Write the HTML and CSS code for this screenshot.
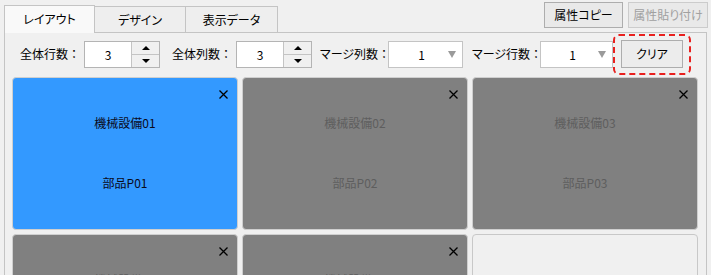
FILE: index.html
```html
<!DOCTYPE html>
<html lang="ja">
<head>
<meta charset="utf-8">
<link rel="stylesheet" href="styles.css">
</head>
<body>
<div class="header">
  <div class="tabs">
    <div class="tab active">レイアウト</div>
    <div class="tab">デザイン</div>
    <div class="tab">表示データ</div>
  </div>
  <div class="actions">
    <button class="btn btn-copy">属性コピー</button>
    <button class="btn btn-paste" disabled>属性貼り付け</button>
  </div>
</div>
<div class="panel">
  <div class="controls">
    <span class="label l1">全体行数<span class="colon">：</span></span>
    <div class="spin">
      <div class="spin-val">3</div>
      <div class="spin-btns">
        <div class="spin-up"><span class="tri-up"></span></div>
        <div class="spin-down"><span class="tri-down"></span></div>
      </div>
    </div>
    <span class="label l2">全体列数<span class="colon">：</span></span>
    <div class="spin">
      <div class="spin-val">3</div>
      <div class="spin-btns">
        <div class="spin-up"><span class="tri-up"></span></div>
        <div class="spin-down"><span class="tri-down"></span></div>
      </div>
    </div>
    <span class="label l3">マージ列数<span class="colon">：</span></span>
    <div class="combo c1">
      <div class="combo-val">1</div>
      <span class="combo-arrow"></span>
    </div>
    <span class="label l4">マージ行数<span class="colon">：</span></span>
    <div class="combo c2">
      <div class="combo-val">1</div>
      <span class="combo-arrow"></span>
    </div>
    <div class="clear-wrap">
      <button class="btn-clear">クリア</button>
      <span class="ring"></span>
    </div>
  </div>
  <div class="grid">
    <div class="card selected">
      <svg class="close" width="9" height="9" viewBox="0 0 9 9"><path d="M0.5 0.5L8.5 8.5M8.5 0.5L0.5 8.5" stroke="#000" stroke-width="1.3"/></svg>
      <div class="t1">機械設備01</div>
      <div class="t2">部品P01</div>
    </div>
    <div class="card">
      <svg class="close" width="9" height="9" viewBox="0 0 9 9"><path d="M0.5 0.5L8.5 8.5M8.5 0.5L0.5 8.5" stroke="#000" stroke-width="1.3"/></svg>
      <div class="t1">機械設備02</div>
      <div class="t2">部品P02</div>
    </div>
    <div class="card">
      <svg class="close" width="9" height="9" viewBox="0 0 9 9"><path d="M0.5 0.5L8.5 8.5M8.5 0.5L0.5 8.5" stroke="#000" stroke-width="1.3"/></svg>
      <div class="t1">機械設備03</div>
      <div class="t2">部品P03</div>
    </div>
    <div class="card">
      <svg class="close" width="9" height="9" viewBox="0 0 9 9"><path d="M0.5 0.5L8.5 8.5M8.5 0.5L0.5 8.5" stroke="#000" stroke-width="1.3"/></svg>
      <div class="t1">機械設備04</div>
      <div class="t2">部品P04</div>
    </div>
    <div class="card">
      <svg class="close" width="9" height="9" viewBox="0 0 9 9"><path d="M0.5 0.5L8.5 8.5M8.5 0.5L0.5 8.5" stroke="#000" stroke-width="1.3"/></svg>
      <div class="t1">機械設備05</div>
      <div class="t2">部品P05</div>
    </div>
    <div class="card empty"></div>
  </div>
</div>
</body>
</html>
```

FILE: styles.css
```css
* { box-sizing: border-box; }
html, body {
  margin: 0;
  padding: 0;
  background: #f0f0f0;
  font-family: "Noto Sans CJK JP", "Noto Sans", sans-serif;
  font-size: 12px;
  color: #000;
  font-feature-settings: "palt";
  overflow: hidden;
}
.header {
  height: 32px;
  display: flex;
  justify-content: space-between;
  padding-left: 4px;
  padding-right: 3px;
}
.tabs {
  display: flex;
  align-items: flex-end;
}
.tab {
  width: 91px;
  height: 26px;
  border: 1px solid #c4c4c4;
  border-left: none;
  border-bottom: none;
  background: #eeeeee;
  display: flex;
  align-items: center;
  justify-content: center;
  line-height: 1;
}
.tab:last-child { width: 92px; }
.tab.active {
  height: 28px;
  border-left: 1px solid #c4c4c4;
  background: #f9f9f9;
  position: relative;
  z-index: 2;
  margin-bottom: -1px;
  padding-bottom: 2px;
}
.actions {
  display: flex;
  gap: 5px;
  padding-top: 2px;
}
.btn {
  height: 26px;
  border: 1px solid #adadad;
  background: #e9e9e9;
  font-family: inherit;
  font-size: 12px;
  font-feature-settings: "palt";
  color: #000;
  padding: 0;
  line-height: 1;
}
.btn-copy { width: 79px; }
.btn-paste {
  width: 80px;
  color: #a0a0a0;
  border-color: #cccccc;
}
.panel {
  margin-left: 4px;
  margin-right: 4px;
  border: 1px solid #c4c4c4;
  border-bottom: none;
  background: #f0f0f0;
  height: 243px;
  overflow: hidden;
  position: relative;
  z-index: 1;
}
.controls {
  display: flex;
  align-items: center;
  height: 28px;
  margin-top: 7px;
  padding-left: 15px;
}
.label {
  white-space: nowrap;
  line-height: 1;
}
.colon { font-feature-settings: normal; }
.l1 { width: 64px; }
.l2 { width: 64px; margin-left: 12px; }
.l3 { width: 68px; margin-left: 8px; }
.l4 { width: 68px; margin-left: 9px; }
.spin {
  width: 76px;
  height: 27px;
  border: 1px solid #b4b4b4;
  display: flex;
  background: #fff;
}
.spin-val {
  flex: 1;
  display: flex;
  align-items: center;
  justify-content: center;
  font-size: 12px;
}
.spin-btns {
  width: 28px;
  border-left: 1px solid #c4c4c4;
  display: flex;
  flex-direction: column;
  background: #f0f0f0;
}
.spin-up, .spin-down {
  flex: 1;
  display: flex;
  align-items: center;
  justify-content: center;
}
.spin-up { border-bottom: 1px solid #c4c4c4; }
.tri-up {
  width: 0; height: 0;
  border-left: 4px solid transparent;
  border-right: 4px solid transparent;
  border-bottom: 4px solid #000;
}
.tri-down {
  width: 0; height: 0;
  border-left: 4px solid transparent;
  border-right: 4px solid transparent;
  border-top: 4px solid #000;
}
.combo {
  height: 27px;
  border: 1px solid #c4c4c4;
  background: #fff;
  display: flex;
  align-items: center;
  padding-right: 6px;
}
.c1 { width: 75px; }
.c2 { width: 73px; }
.combo-val {
  flex: 1;
  text-align: center;
  padding-left: 6px;
}
.combo-arrow {
  width: 0; height: 0;
  border-left: 4px solid transparent;
  border-right: 4px solid transparent;
  border-top: 7px solid #9a9a9a;
}
.clear-wrap {
  position: relative;
  margin-left: 8px;
  height: 28px;
}
.btn-clear {
  width: 62px;
  height: 28px;
  border: 1px solid #adadad;
  background: #ececec;
  font-family: inherit;
  font-size: 12px;
  font-feature-settings: "palt";
  color: #000;
  padding: 0;
  line-height: 1;
}
.ring {
  position: absolute;
  left: -8px;
  right: -8px;
  top: -6px;
  bottom: -7px;
  border: 2px dashed #e8201e;
  border-radius: 6px;
  pointer-events: none;
}
.grid {
  display: grid;
  grid-template-columns: repeat(3, 226px);
  grid-auto-rows: 153px;
  gap: 4px;
  margin-top: 9px;
  padding-left: 7px;
}
.card {
  position: relative;
  border: 1px solid #cfcfcf;
  border-radius: 4px;
  background: #808080;
  color: #5e5e5e;
  display: flex;
  flex-direction: column;
  align-items: center;
  justify-content: flex-start;
  padding-top: 37px;
  gap: 44px;
  line-height: 16px;
}
.card.selected {
  background: #3399ff;
  color: #0a0a1a;
}
.card.empty {
  background: #f0f0f0;
  border-color: #c8c8c8;
}
.close {
  position: absolute;
  top: 12px;
  right: 9px;
}
```
